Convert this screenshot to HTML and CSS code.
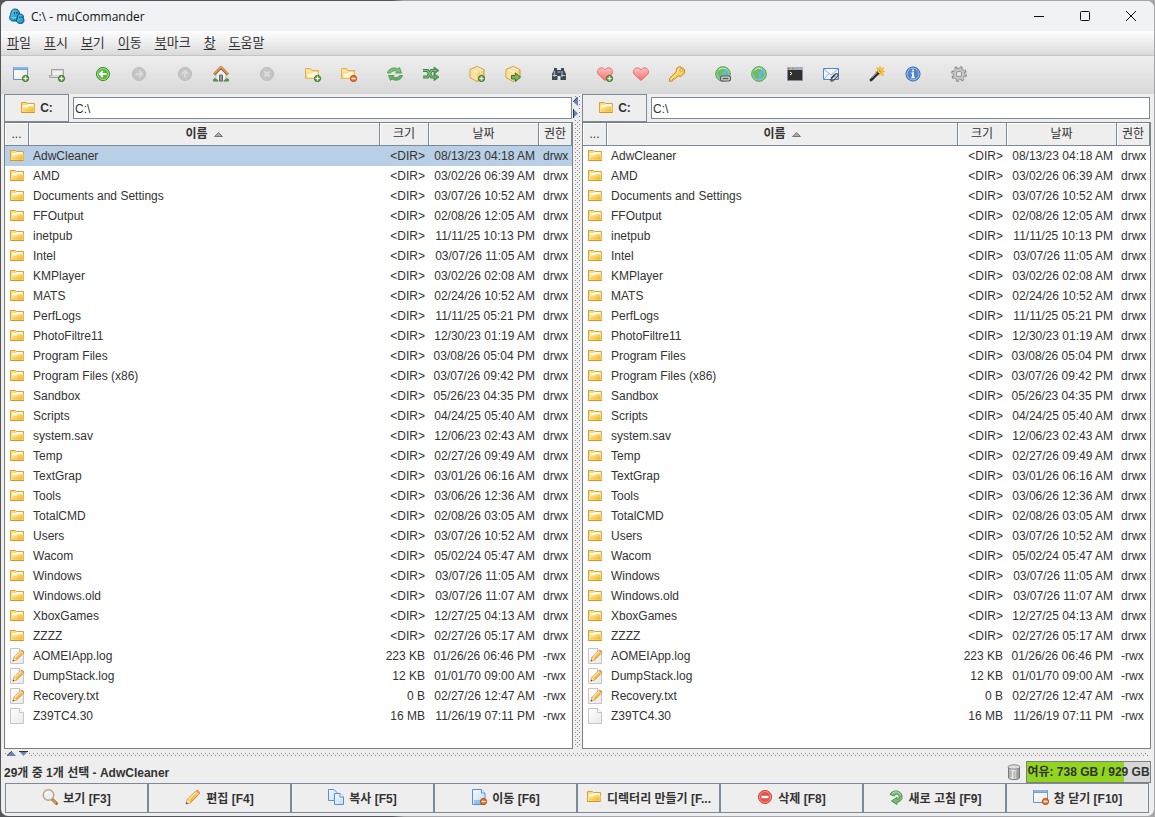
FILE: index.html
```html
<!DOCTYPE html>
<html lang="ko">
<head>
    <meta charset="UTF-8">
    <meta name="viewport" content="width=device-width, initial-scale=1.0">
    <title>C:\ - muCommander</title>
    <link rel="stylesheet" href="styles.css">
</head>
<body>
    <!-- Shared icons -->
    <svg class="sprite" aria-hidden="true">
        <defs>
            <linearGradient id="gFolder" x1="0" y1="0" x2="1" y2="1">
                <stop offset="0" stop-color="#fff0a8"/><stop offset="1" stop-color="#f2ae18"/>
            </linearGradient>
            <linearGradient id="gPage" x1="0" y1="0" x2="1" y2="1">
                <stop offset="0" stop-color="#fff"/><stop offset="1" stop-color="#e9e9e9"/>
            </linearGradient>
            <linearGradient id="gBlue" x1="0" y1="0" x2="1" y2="1">
                <stop offset="0" stop-color="#f4f9ff"/><stop offset="1" stop-color="#c3dcf8"/>
            </linearGradient>
            <linearGradient id="gHeart" x1="0" y1="0" x2="0" y2="1">
                <stop offset="0" stop-color="#ffc4c4"/><stop offset="1" stop-color="#fb6a6a"/>
            </linearGradient>
            <linearGradient id="gDrop" x1="0" y1="0" x2="1" y2="1">
                <stop offset="0" stop-color="#5fd0f2"/><stop offset="1" stop-color="#0b86bd"/>
            </linearGradient>
            <linearGradient id="gTrash" x1="0" y1="0" x2="1" y2="0">
                <stop offset="0" stop-color="#a5a5a5"/><stop offset=".4" stop-color="#f4f4f4"/><stop offset="1" stop-color="#8c8c8c"/>
            </linearGradient>
        </defs>
        <symbol id="plus" viewBox="0 0 16 16">
            <circle cx="12.5" cy="12.5" r="3.1" fill="#6fa84a" stroke="#38702a"/>
            <path d="M12.5 10.5v4M10.5 12.5h4" stroke="#fff" stroke-width="1.2"/>
        </symbol>
        <symbol id="minus" viewBox="0 0 16 16">
            <circle cx="12.5" cy="12.5" r="3.1" fill="#ef7026" stroke="#c3420c"/>
            <path d="M10.5 12.5h4" stroke="#fff" stroke-width="1.3"/>
        </symbol>
        <symbol id="folder" viewBox="0 0 16 16">
            <path d="M1.5 12.5v-10h5l1 1h7v9z" fill="#fbdc74" stroke="#dfa035"/>
            <path d="M3 5h4l1-1h5.500v3H3z" fill="#fffdf0"/>
            <path d="M2.500 12V7.500h4.500L8.500 6H14v6z" fill="url(#gFolder)" stroke="#fff0b0" stroke-width=".6"/>
            <path d="M1.500 12.500h13" stroke="#d9922a"/>
        </symbol>
        <symbol id="folder-light" viewBox="0 0 16 16">
            <path d="M.5 12.500v-10h5l1 2h7v8z" fill="#fbe59a" stroke="#dfb04f"/>
            <path d="M2 7h4.500l1.500-1.500h5v6.500h-11z" fill="#fff8d8" stroke="#f2cf6c" stroke-width=".8"/>
        </symbol>
        <symbol id="page" viewBox="0 0 16 16">
            <path d="M1.500.5h9l4 4v11h-13z" fill="url(#gPage)" stroke="#c6c6c6"/>
            <path d="M10.500.5v4h4" fill="#fff" stroke="#c6c6c6"/>
        </symbol>
        <symbol id="pencil" viewBox="0 0 16 16">
            <path d="M1 15l1.300-4.500L11 1.800c1.500-1.300 4.500 1.500 3.200 3.200L5.500 13.600z" fill="#f7bd45" stroke="#b97a25" stroke-width=".9"/>
            <path d="M3.500 10.500L11.200 3" stroke="#ffe9a0" stroke-width="1.500"/>
            <path d="M10 2.700l3.300 3.300" stroke="#d5d5d5" stroke-width="1.200"/>
            <path d="M11.500 1.700c1.300-.8 3.600 1.400 2.700 2.800z" fill="#ee9160"/>
            <path d="M1 15l1.300-4.300c1.400 0 2.800 1.400 3 2.900z" fill="#f9dfb3"/>
            <path d="M1 15l.6-2 1.400 1.400z" fill="#333"/>
        </symbol>
        <symbol id="edit" viewBox="0 0 16 16">
            <use href="#page"/>
            <svg x="3" y="1" width="13" height="13"><use href="#pencil"/></svg>
        </symbol>
        <symbol id="window" viewBox="0 0 16 16">
            <path d="M.5 1.500h14v12h-14z" fill="url(#gPage)" stroke="#6a93c9"/>
            <path d="M0 1h15v3H0z" fill="#6e9fe0"/><path d="M1 2h13" stroke="#a9cbf3"/>
        </symbol>
        <symbol id="window-add" viewBox="0 0 16 16"><use href="#window"/><use href="#plus"/></symbol>
        <symbol id="window-close" viewBox="0 0 16 16"><use href="#window"/><use href="#minus"/></symbol>
        <symbol id="tab-add" viewBox="0 0 16 16">
            <path d="M.5 11.500v-2h2v-6h12v8z" fill="#d9d9d9" stroke="#a2a2a2"/>
            <path d="M4 5h9v4H4z" fill="#eee"/><use href="#plus"/>
        </symbol>
        <symbol id="back" viewBox="0 0 16 16">
            <circle cx="8" cy="8" r="6.500" fill="#55b83a" stroke="#2c8a20"/>
            <circle cx="8" cy="8" r="5.500" fill="none" stroke="#a6e28d"/>
            <path d="M11.500 8H5M7.800 5L4.800 8l3 3" fill="none" stroke="#fff" stroke-width="1.800"/>
        </symbol>
        <symbol id="disc" viewBox="0 0 16 16">
            <circle cx="8" cy="8" r="6.500" fill="#c5c5c5" stroke="#bababa"/>
        </symbol>
        <symbol id="forward" viewBox="0 0 16 16"><use href="#disc"/>
            <path d="M4.500 8H11M8.200 5l3 3-3 3" fill="none" stroke="#dedede" stroke-width="1.600"/></symbol>
        <symbol id="up" viewBox="0 0 16 16"><use href="#disc"/>
            <path d="M8 11.500V5M5 8l3-3 3 3" fill="none" stroke="#dedede" stroke-width="1.600"/></symbol>
        <symbol id="stop" viewBox="0 0 16 16"><use href="#disc"/>
            <path d="M5.500 5.500l5 5M10.500 5.500l-5 5" stroke="#dedede" stroke-width="1.800"/></symbol>
        <symbol id="home" viewBox="0 0 16 16">
            <path d="M3 8l5-5 5 5v7H3z" fill="#f6f6f6" stroke="#aaa" stroke-width=".8"/>
            <path d="M6.500 9h3v6h-3z" fill="#999" stroke="#666"/>
            <path d="M0 15.500v-2.300l2-1.200 3 2v1.500zM16 15.500v-2.300L14 12l-3 2v1.500z" fill="#4a9a49"/>
            <path d="M1 8.500l7-7 7 7" fill="none" stroke="#9c5b24" stroke-width="3"/>
            <path d="M1 8l7-7 7 7" fill="none" stroke="#e5a158" stroke-width="1.700"/>
        </symbol>
        <symbol id="folder-add" viewBox="0 0 16 16"><use href="#folder-light"/><use href="#plus"/></symbol>
        <symbol id="folder-remove" viewBox="0 0 16 16"><use href="#folder-light"/><use href="#minus"/></symbol>
        <symbol id="sync" viewBox="0 0 16 16">
            <path d="M.5 7C1.500 2.500 7 .5 11 3l1.500-1.500L14.500 7H8.700l1.600-1.700C7.500 4 4.500 5 3.500 7z" fill="#7cc07a" stroke="#479148" stroke-width=".8"/>
            <path d="M15.500 9.500c-1 4.500-6.500 6-10.500 3.500l-1.500 1.500L1.500 9.500h5.800L5.700 11c2.800 1.300 5.800.5 6.800-1.500z" fill="#68ae68" stroke="#479148" stroke-width=".8"/>
        </symbol>
        <symbol id="swap" viewBox="0 0 16 16">
            <path d="M0 4.500h4.500l4 6.500H12M0 11h4.500l4-6.500H12" fill="none" stroke="#3d8443" stroke-width="3.200"/>
            <path d="M11 1l5 3.500L11 8zM11 7.500l5 3.500-5 3.700z" fill="#55a158" stroke="#3d8443" stroke-width=".8"/>
            <path d="M0 4.500h4.500l4 6.500H13M0 11h4.500l4-6.500H13" fill="none" stroke="#86c585" stroke-width="1.200"/>
        </symbol>
        <symbol id="box" viewBox="0 0 16 16">
            <path d="M8 .5l7 3.200v8L8 15.500l-7-4v-8z" fill="#f8d27f" stroke="#cf9430"/>
            <path d="M1.500 4L8 7l6.500-3L8 1z" fill="#fff0bf"/>
            <path d="M8 7.500V15l-6.500-3.700V4.500z" fill="#fce2a1"/>
            <path d="M4.500 2.500l6.500 3v3l1.500-.7V5L6 2z" fill="#fff" stroke="#e2b355" stroke-width=".5"/>
        </symbol>
        <symbol id="pack" viewBox="0 0 16 16"><use href="#box"/><use href="#plus"/></symbol>
        <symbol id="unpack" viewBox="0 0 16 16"><use href="#box"/>
            <path d="M6.500 9.500h4v-2.500l5 4.200-5 4.300V13h-4z" fill="#72b75d" stroke="#37762f"/></symbol>
        <symbol id="find" viewBox="0 0 16 16">
            <path d="M3 2h3v2h4V2h3v2l2 4v6H9.500v-4h-3v4H1V8l2-4z" fill="#3f4954"/>
            <path d="M3.500 5v6M11 5v6" stroke="#93a1af" stroke-width="1.500"/>
            <path d="M6.500 6h3M1.500 9.500h4.500M10 9.500h4.500" stroke="#bac3cc"/>
        </symbol>
        <symbol id="heart" viewBox="0 0 16 16">
            <path d="M8 14.500L1.300 8.300C-1 5 2 1 5.500 2 7 2.300 8 4 8 4s1-1.700 2.500-2C14 1 17 5 14.700 8.300z" fill="url(#gHeart)" stroke="#df6262" stroke-width=".9"/>
        </symbol>
        <symbol id="heart-add" viewBox="0 0 16 16"><use href="#heart"/><use href="#plus"/></symbol>
        <symbol id="key" viewBox="0 0 16 16">
            <path d="M8 2l3-1.500 4.500 3V7L12 10.500l-3-.5L5.500 13 4 12.800 3.500 15l-3 .3v-2.800L7 6z" fill="#f9cf55" stroke="#c78b25"/>
            <path d="M2 13.500l6.500-6.300L9 3.500l2-1.500" fill="none" stroke="#fff2ae"/>
            <circle cx="12.300" cy="4" r="1.300" fill="#fff" stroke="#c78b25" stroke-width=".8"/>
        </symbol>
        <symbol id="globe" viewBox="0 0 16 16">
            <circle cx="8" cy="8" r="7.300" fill="#9bd193" stroke="#4f9b52"/>
            <circle cx="8" cy="8" r="5.700" fill="#65b6e4"/>
            <path d="M3 5l4-3 4 1-2 3-2 1 1 3-1 3-3-2-2-4zM10 8l3.500-1-1 4-2 2z" fill="#6cbd62"/>
            <path d="M4 4c2-2 5-2 7-1" fill="none" stroke="#d2f0d0"/>
        </symbol>
        <symbol id="server" viewBox="0 0 16 16"><use href="#globe"/>
            <rect x="5.500" y="10" width="10" height="5" rx="2" fill="#ddd" stroke="#555" stroke-width="1.200"/>
            <path d="M7.500 12.500h6" stroke="#555" stroke-width="1.600"/></symbol>
        <symbol id="terminal" viewBox="0 0 16 16">
            <path d="M.5 1.500h15v13H.5z" fill="#303030" stroke="#858b98"/>
            <path d="M0 1h16v3H0z" fill="#a7adba"/>
            <path d="M1 2.500h1.500" stroke="#e33"/><path d="M3 2.500h1.500" stroke="#fb2"/><path d="M5 2.500h1.500" stroke="#4b4"/>
            <path d="M3 6l2 1.500L3 9" fill="none" stroke="#fff"/>
        </symbol>
        <symbol id="mail" viewBox="0 0 16 16">
            <path d="M.5 2.500h15v11H.5z" fill="#f1f7ff" stroke="#5285cb"/>
            <path d="M1 3l7 6 7-6M1 13l5-5.500M15 13l-5-5.500" fill="none" stroke="#85acdf"/>
            <path d="M8 12l4.500-4c1.500-1 3.500.7 2 2.300L10 14.800c-1.500 1-3-.5-2-1.700l4-3.700" fill="none" stroke="#444" stroke-width="1.200"/>
        </symbol>
        <symbol id="wand" viewBox="0 0 16 16">
            <path d="M11 0l.8 3L15 1.500 13.300 4.500l2.700 1-2.700 1L14.500 10l-3-2-2 2-.3-3L6 6l3-1.300L7.500 1.500l2.800 1.300z" fill="#ffc62b" stroke="#f1a51e" stroke-width=".5"/>
            <path d="M2 14l8-8" stroke="#282828" stroke-width="2.800" stroke-linecap="round"/>
            <path d="M2.500 12.500l6-6" stroke="#888"/><path d="M9.500 6.500l1-1" stroke="#fff" stroke-width="2.200"/>
        </symbol>
        <symbol id="info" viewBox="0 0 16 16">
            <circle cx="8" cy="8" r="7" fill="#4f86c8" stroke="#2f62a6"/>
            <circle cx="8" cy="8" r="6" fill="none" stroke="#a5c4e9"/>
            <path d="M8 3.500v2M6.500 7H8v4.500M6.300 11.500h3.500" fill="none" stroke="#fff" stroke-width="1.700"/>
        </symbol>
        <symbol id="gear" viewBox="0 0 16 16">
            <circle cx="8" cy="8" r="6.500" fill="none" stroke="#888" stroke-width="2.800" stroke-dasharray="2.600 2.505"/>
            <circle cx="8" cy="8" r="4.300" fill="none" stroke="#888" stroke-width="4"/>
            <circle cx="8" cy="8" r="6" fill="none" stroke="#c5c5c5" stroke-width="1.800" stroke-dasharray="1.600 3.112"/>
            <circle cx="8" cy="8" r="4.200" fill="none" stroke="#c5c5c5" stroke-width="2.600"/>
        </symbol>
        <symbol id="magnifier" viewBox="0 0 16 16">
            <path d="M10.500 10.500l4 4" stroke="#a9682c" stroke-width="3" stroke-linecap="round"/>
            <path d="M11 11l3 3" stroke="#e3a866" stroke-width="1.300"/>
            <circle cx="6.500" cy="6" r="5.300" fill="#e5effa" stroke="#c0a078" stroke-width="1.400"/>
            <path d="M3.500 6c0-2 1.500-3 3-3" fill="none" stroke="#fff" stroke-width="1.500"/>
        </symbol>
        <symbol id="copy" viewBox="0 0 16 16">
            <path d="M.5.500h5.500l3 3V11.500H.5z" fill="url(#gBlue)" stroke="#5b8fd2"/>
            <path d="M6.500 4.500H12l3.500 3.500v7.500h-9z" fill="url(#gBlue)" stroke="#5b8fd2"/>
            <path d="M12 4.500V8h3.500" fill="#fff" stroke="#5b8fd2"/>
        </symbol>
        <symbol id="move" viewBox="0 0 16 16">
            <path d="M1.500.5h9l3.500 3.500v11.500H1.500z" fill="url(#gBlue)" stroke="#5b8fd2"/>
            <path d="M10.500.5V4H14" fill="#fff" stroke="#5b8fd2"/>
            <path d="M3 12h8M3 14h8" stroke="#3fa0e5"/><use href="#minus"/>
        </symbol>
        <symbol id="delete" viewBox="0 0 16 16">
            <circle cx="8" cy="8" r="6.500" fill="#e45145" stroke="#c83a35"/>
            <circle cx="8" cy="8" r="5.500" fill="none" stroke="#f4978b"/>
            <path d="M4.500 8h7" stroke="#fff" stroke-width="2.400"/>
        </symbol>
        <symbol id="refresh" viewBox="0 0 16 16">
            <path d="M2 5.500C4 .5 13 .5 14 7c.5 3.500-2 6-5 6.300V15.500L3.500 12 9 8.300v2.200c2-.5 2.500-2 2-3.500C10.500 4.500 7 4.500 6.500 7z" fill="#78bb72" stroke="#4b954b"/>
            <path d="M4 5c2-3 7-3 8.500 1.500" fill="none" stroke="#b9e3b0"/>
        </symbol>
        <symbol id="trash" viewBox="0 0 14 16">
            <path d="M1.500 3v11c1 2 10 2 11 0V3z" fill="url(#gTrash)" stroke="#777"/>
            <ellipse cx="7" cy="3" rx="6" ry="2.200" fill="#ddd" stroke="#888"/>
            <path d="M4 7v6M7 7.500v6.500M10 7v6" stroke="#999"/>
        </symbol>
        <symbol id="logo" viewBox="0 0 16 16">
            <path d="M6 1c3 0 4.500 2 4.500 5v4c0 2-1 3-2.500 3H4c-3 0-4-3-3-5C2 6.500 1.500 1 6 1z" fill="url(#gDrop)" stroke="#135273"/>
            <path d="M11.500 6c2 0 3 1.500 3 3.500l.5 3c0 2-1.500 3-3.500 3s-4-1-4-3l1-3.500c0-2 1.500-3 3-3z" fill="url(#gDrop)" stroke="#135273"/>
            <path d="M5.500 4v2M8 4v2M10.700 8.500v1.500M13 8.500v1.500" stroke="#08354d"/>
            <path d="M3 9c1 1.500 3 1.500 4 0" fill="none" stroke="#9ce5fa"/>
        </symbol>
    </svg>

    <div class="window">
        <header class="titlebar">
            <svg class="icon"><use href="#logo"/></svg>
            <h1 class="title">C:\ - muCommander</h1>
            <button class="win-btn" aria-label="최소화"><svg viewBox="0 0 12 12"><path d="M1 6.500h10"/></svg></button>
            <button class="win-btn" aria-label="최대화"><svg viewBox="0 0 12 12"><rect x="1.500" y="1.500" width="9" height="9" rx="1"/></svg></button>
            <button class="win-btn" aria-label="닫기"><svg viewBox="0 0 12 12"><path d="M1 1l10 10M11 1L1 11"/></svg></button>
        </header>

        <nav class="menubar">
            <button><u>파</u>일</button>
            <button><u>표</u>시</button>
            <button><u>보</u>기</button>
            <button><u>이</u>동</button>
            <button><u>북</u>마크</button>
            <button><u>창</u></button>
            <button><u>도</u>움말</button>
        </nav>

        <div class="toolbar" id="toolbar"></div>

        <main class="panels">
            <section class="panel" data-label="왼쪽" data-selected="0"></section>
            <div class="splitter-v">
                <svg viewBox="0 0 5 22"><path d="M5 0v9L0 4.500z" fill="#6382bf"/><path d="M4.500 0L.5 4.500" fill="none" stroke="#333"/><path d="M0 12l5 4.500L0 21z" fill="#6382bf"/><path d="M.5 12v9" stroke="#333"/></svg>
            </div>
            <section class="panel" data-label="오른쪽"></section>
        </main>

        <div class="splitter-h">
            <svg viewBox="0 0 22 5"><path d="M0 5l4.500-5L9 5z" fill="#6382bf"/><path d="M0 4.500L4.500.5" fill="none" stroke="#333"/><path d="M12 0h9l-4.500 5z" fill="#6382bf"/><path d="M12 .5h9" stroke="#333"/></svg>
        </div>

        <div class="statusbar">
            <span class="selection">29개 중 1개 선택 - AdwCleaner</span>
            <svg class="trash" role="img" aria-label="휴지통"><use href="#trash"/></svg>
            <div class="volume">
                <div class="volume-free" style="width: 79%"></div>
                <span class="volume-text">여유: 738 GB / 929 GB</span>
            </div>
        </div>

        <footer class="commands">
            <button><svg class="icon"><use href="#magnifier"/></svg><span>보기 [F3]</span></button>
            <button><svg class="icon"><use href="#pencil"/></svg><span>편집 [F4]</span></button>
            <button><svg class="icon"><use href="#copy"/></svg><span>복사 [F5]</span></button>
            <button><svg class="icon"><use href="#move"/></svg><span>이동 [F6]</span></button>
            <button><svg class="icon"><use href="#folder"/></svg><span>디렉터리 만들기 [F...</span></button>
            <button><svg class="icon"><use href="#delete"/></svg><span>삭제 [F8]</span></button>
            <button><svg class="icon"><use href="#refresh"/></svg><span>새로 고침 [F9]</span></button>
            <button><svg class="icon"><use href="#window-close"/></svg><span>창 닫기 [F10]</span></button>
        </footer>
    </div>

    <script src="script.js"></script>
</body>
</html>
```

FILE: styles.css
```css
* {
    box-sizing: border-box;
}

body {
    margin: 0;
    height: 100vh;
    background: linear-gradient(90deg, #55565b 34%, #a6a6aa 35%);
    font-family: "Liberation Sans", "Noto Sans CJK KR", sans-serif;
    font-size: 12px;
    color: #333;
}

button,
input {
    font: inherit;
    color: inherit;
    margin: 0;
    border-radius: 0;
}

button {
    background: none;
    border: 0;
    padding: 0;
}

.sprite {
    position: absolute;
    width: 0;
    height: 0;
}

.icon {
    width: 16px;
    height: 16px;
    flex: none;
}

.window {
    display: flex;
    flex-direction: column;
    height: 100vh;
    border: 1px solid transparent;
    border-radius: 8px;
    background: #eee padding-box;
    overflow: hidden;
}

/* Title bar */
.titlebar {
    display: flex;
    align-items: center;
    height: 30px;
    padding-left: 8px;
    background: #f1f2f5;
    flex: none;
}

.title {
    flex: 1;
    margin: 0 0 0 6px;
    font-family: "Open Sans", "Noto Sans", sans-serif;
    font-size: 12px;
    font-weight: normal;
    color: #111;
}

.win-btn {
    display: flex;
    align-items: center;
    justify-content: center;
    width: 46px;
    height: 30px;
}

.win-btn svg {
    width: 12px;
    height: 12px;
    fill: none;
    stroke: #111;
}

/* Menu and toolbar */
.menubar {
    display: flex;
    gap: 13px;
    height: 25px;
    padding: 0 6px 4px;
    background: linear-gradient(#fff, #dadada);
    border-bottom: 1px solid #c4c4c4;
    font-size: 13px;
    flex: none;
}

.menubar u {
    text-underline-offset: 2px;
}

.toolbar {
    display: flex;
    align-items: center;
    gap: 10px;
    height: 38px;
    padding: 0 2px 2px;
    background: linear-gradient(#efefef, #d8d8d8);
    flex: none;
}

.tool-group {
    display: flex;
}

.tool-group button {
    display: flex;
    align-items: center;
    justify-content: center;
    width: 36px;
    height: 32px;
}

/* File panels */
.panels {
    display: flex;
    flex: 1;
    min-height: 0;
    padding: 0 3px;
}

.panel {
    display: flex;
    flex-direction: column;
    flex: 1;
    min-width: 0;
}

.location {
    display: flex;
    align-items: center;
    gap: 4px;
    height: 28px;
    padding-right: 1px;
    flex: none;
}

.drive {
    display: flex;
    align-items: center;
    justify-content: center;
    gap: 4px;
    width: 65px;
    height: 28px;
    border: 1px solid #7a8a99;
    background: #eee;
    font-weight: bold;
}

.path {
    flex: 1;
    min-width: 0;
    height: 22px;
    padding: 1px 1px 0;
    border: 1px solid #7a8a99;
    background: #fff;
}

.files {
    flex: 1;
    min-height: 0;
    background: #fff;
    border: 1px solid #7f7f7f;
    overflow: hidden;
}

.file-table {
    width: 100%;
    table-layout: fixed;
    border-collapse: separate;
    border-spacing: 0;
}

.file-table th {
    height: 23px;
    padding: 0;
    background: #eee;
    border-right: 1px solid #7a8a99;
    border-bottom: 1px solid #7a8a99;
    box-shadow: inset 1px 1px #fff;
    font-weight: normal;
    line-height: 20px;
}

.file-table th.sorted {
    font-weight: bold;
}

.sort-arrow {
    width: 9px;
    height: 5px;
    margin-left: 6px;
    vertical-align: 1px;
}

.file-table td {
    height: 20px;
    padding: 0 4px;
    line-height: 20px;
    text-align: right;
    white-space: nowrap;
}

.file-table td .icon {
    display: block;
}

.file-table .name,
.file-table .perm {
    text-align: left;
}

.file-table .name {
    overflow: hidden;
    text-overflow: ellipsis;
}

.file-table .selected {
    background: #b8cfe5;
}

.col-icon { width: 24px; }
.col-size { width: 49px; }
.col-date { width: 110px; }
.col-perm { width: 33px; }

/* Split bars */
.splitter-v,
.splitter-h {
    flex: none;
    background-clip: content-box;
    background-image:
        conic-gradient(from 270deg at 1px 1px, #888 25%, transparent 0),
        conic-gradient(from 270deg at 1px 1px, #888 25%, transparent 0);
    background-size: 4px 4px;
    background-position: 0 0, 2px 2px;
}

.splitter-v {
    position: relative;
    width: 9px;
    padding: 2px;
}

.splitter-v svg {
    position: absolute;
    left: 0;
    top: 3px;
    width: 5px;
    height: 22px;
    background: #eee;
}

.splitter-h {
    position: relative;
    height: 9px;
    padding: 3px 6px 2px 4px;
}

.splitter-h svg {
    position: absolute;
    left: 6px;
    top: 2px;
    width: 22px;
    height: 5px;
    background: #eee;
}

/* Status bar */
.statusbar {
    display: flex;
    align-items: center;
    gap: 5px;
    height: 25px;
    padding: 0 3px;
    font-weight: bold;
    flex: none;
}

.selection {
    flex: 1;
    padding-top: 2px;
}

.trash {
    width: 14px;
    height: 16px;
    margin-top: 3px;
}

.volume {
    position: relative;
    width: 125px;
    height: 22px;
    margin-top: 2px;
    border: 1px solid #7f7f7f;
    background: #d7d7d7;
    text-align: center;
    line-height: 20px;
    white-space: nowrap;
}

.volume-free {
    position: absolute;
    inset: 0 auto 0 0;
    background: #91d51f;
}

.volume-text {
    position: relative;
}

/* Command bar */
.commands {
    display: flex;
    padding: 0 5px 3px 4px;
    flex: none;
}

.commands button {
    display: flex;
    align-items: center;
    justify-content: center;
    gap: 5px;
    flex: 1;
    min-width: 0;
    height: 30px;
    padding-bottom: 2px;
    border: 1px solid #7a8a99;
    font-weight: bold;
    white-space: nowrap;
}
```

FILE: script.js
```js
const toolGroups = [
    [['window-add', '새 창'], ['tab-add', '새 탭']],
    [['back', '뒤로'], ['forward', '앞으로']],
    [['up', '상위 폴더'], ['home', '홈']],
    [['stop', '중지']],
    [['folder-add', '선택 추가'], ['folder-remove', '선택 제거']],
    [['sync', '폴더 동기화'], ['swap', '폴더 교환']],
    [['pack', '압축'], ['unpack', '압축 풀기']],
    [['find', '찾기']],
    [['heart-add', '북마크 추가'], ['heart', '북마크 편집'], ['key', '인증 정보']],
    [['server', '서버 연결'], ['globe', '서버 연결 보기'], ['terminal', '명령 실행'], ['mail', '메일']],
    [['wand', '일괄 이름 변경'], ['info', '속성']],
    [['gear', '환경 설정']]
];

// name, date, size, permissions, icon
const files = [
    ['AdwCleaner', '08/13/23 04:18 AM'],
    ['AMD', '03/02/26 06:39 AM'],
    ['Documents and Settings', '03/07/26 10:52 AM'],
    ['FFOutput', '02/08/26 12:05 AM'],
    ['inetpub', '11/11/25 10:13 PM'],
    ['Intel', '03/07/26 11:05 AM'],
    ['KMPlayer', '03/02/26 02:08 AM'],
    ['MATS', '02/24/26 10:52 AM'],
    ['PerfLogs', '11/11/25 05:21 PM'],
    ['PhotoFiltre11', '12/30/23 01:19 AM'],
    ['Program Files', '03/08/26 05:04 PM'],
    ['Program Files (x86)', '03/07/26 09:42 PM'],
    ['Sandbox', '05/26/23 04:35 PM'],
    ['Scripts', '04/24/25 05:40 AM'],
    ['system.sav', '12/06/23 02:43 AM'],
    ['Temp', '02/27/26 09:49 AM'],
    ['TextGrap', '03/01/26 06:16 AM'],
    ['Tools', '03/06/26 12:36 AM'],
    ['TotalCMD', '02/08/26 03:05 AM'],
    ['Users', '03/07/26 10:52 AM'],
    ['Wacom', '05/02/24 05:47 AM'],
    ['Windows', '03/07/26 11:05 AM'],
    ['Windows.old', '03/07/26 11:07 AM'],
    ['XboxGames', '12/27/25 04:13 AM'],
    ['ZZZZ', '02/27/26 05:17 AM'],
    ['AOMEIApp.log', '01/26/26 06:46 PM', '223 KB', '-rwx', 'edit'],
    ['DumpStack.log', '01/01/70 09:00 AM', '12 KB', '-rwx', 'edit'],
    ['Recovery.txt', '02/27/26 12:47 AM', '0 B', '-rwx', 'edit'],
    ['Z39TC4.30', '11/26/19 07:11 PM', '16 MB', '-rwx', 'page']
];

function icon(name) {
    return `<svg class="icon"><use href="#${name}"/></svg>`;
}

document.getElementById('toolbar').innerHTML = toolGroups.map(group =>
    `<div class="tool-group">${group.map(([name, label]) =>
        `<button aria-label="${label}">${icon(name)}</button>`).join('')}</div>`
).join('');

document.querySelectorAll('.panel').forEach(panel => {
    const rows = files.map(([name, date, size = '&lt;DIR&gt;', perm = 'drwx', type = 'folder'], i) => `
        <tr class="${String(i) === panel.dataset.selected ? 'selected' : ''}">
            <td>${icon(type)}</td>
            <td class="name">${name}</td>
            <td>${size}</td>
            <td>${date}</td>
            <td class="perm">${perm}</td>
        </tr>`).join('');

    panel.innerHTML = `
        <div class="location">
            <button class="drive">${icon('folder')}C:</button>
            <input class="path" type="text" value="C:\\" aria-label="${panel.dataset.label} 경로">
        </div>
        <div class="files">
            <table class="file-table">
                <colgroup>
                    <col class="col-icon"><col><col class="col-size"><col class="col-date"><col class="col-perm">
                </colgroup>
                <thead>
                    <tr>
                        <th>...</th>
                        <th class="sorted">이름<svg class="sort-arrow" viewBox="0 0 9 5"><path d="M.5 4.500h8L4.500.5z" fill="#aaa" stroke="#777"/></svg></th>
                        <th>크기</th>
                        <th>날짜</th>
                        <th>권한</th>
                    </tr>
                </thead>
                <tbody>${rows}</tbody>
            </table>
        </div>`;
});
```
